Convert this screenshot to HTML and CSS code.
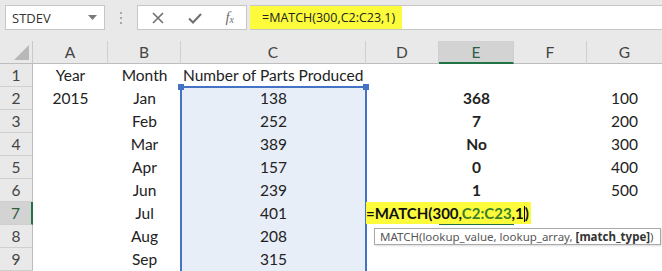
FILE: index.html
```html
<!DOCTYPE html>
<html lang="en">
<head>
  <meta charset="UTF-8" />
  <title>MATCH - Sheet</title>
  <link rel="stylesheet" href="styles.css">
</head>
<body>
  <!-- Formula bar -->
  <div class="toolbar">
    <div class="name-box">
      <span>STDEV</span>
      <svg class="drop" width="9" height="5" viewBox="0 0 9 5"><path d="M0 0h9L4.5 5z" fill="#7a7a7a"/></svg>
    </div>
    <div class="grip"><i></i><i></i><i></i></div>
    <div class="fx-buttons">
      <svg width="14" height="14" viewBox="0 0 14 14"><path d="M2 2l10 10M12 2L2 12" stroke="#6f6f6f" stroke-width="1.6" fill="none"/></svg>
      <svg width="16" height="14" viewBox="0 0 16 14"><path d="M2 7.5l4 4L14 3" stroke="#6f6f6f" stroke-width="2" fill="none"/></svg>
      <span class="fx">f<sub>x</sub></span>
    </div>
    <div class="formula-input">
      <span class="formula-text">=MATCH(300,C2:C23,1)</span>
    </div>
  </div>

  <!-- Sheet grid -->
  <div class="sheet">
    <div class="corner"></div>
    <div class="col-head">A</div>
    <div class="col-head">B</div>
    <div class="col-head">C</div>
    <div class="col-head">D</div>
    <div class="col-head active">E</div>
    <div class="col-head">F</div>
    <div class="col-head last">G</div>

    <div class="row-head">1</div>
    <div class="cell">Year</div>
    <div class="cell">Month</div>
    <div class="cell left">Number of Parts Produced</div>
    <div class="cell"></div><div class="cell"></div><div class="cell"></div><div class="cell"></div>

    <div class="row-head">2</div>
    <div class="cell">2015</div>
    <div class="cell">Jan</div>
    <div class="cell range">138</div>
    <div class="cell"></div><div class="cell bold">368</div><div class="cell"></div><div class="cell">100</div>

    <div class="row-head">3</div>
    <div class="cell"></div>
    <div class="cell">Feb</div>
    <div class="cell range">252</div>
    <div class="cell"></div><div class="cell bold">7</div><div class="cell"></div><div class="cell">200</div>

    <div class="row-head">4</div>
    <div class="cell"></div>
    <div class="cell">Mar</div>
    <div class="cell range">389</div>
    <div class="cell"></div><div class="cell bold">No</div><div class="cell"></div><div class="cell">300</div>

    <div class="row-head">5</div>
    <div class="cell"></div>
    <div class="cell">Apr</div>
    <div class="cell range">157</div>
    <div class="cell"></div><div class="cell bold">0</div><div class="cell"></div><div class="cell">400</div>

    <div class="row-head">6</div>
    <div class="cell"></div>
    <div class="cell">Jun</div>
    <div class="cell range">239</div>
    <div class="cell"></div><div class="cell bold">1</div><div class="cell"></div><div class="cell">500</div>

    <div class="row-head active">7</div>
    <div class="cell"></div>
    <div class="cell">Jul</div>
    <div class="cell range">401</div>
    <div class="cell"></div><div class="cell selected"></div><div class="cell"></div><div class="cell"></div>

    <div class="row-head">8</div>
    <div class="cell"></div>
    <div class="cell">Aug</div>
    <div class="cell range">208</div>
    <div class="cell"></div><div class="cell"></div><div class="cell"></div><div class="cell"></div>

    <div class="row-head">9</div>
    <div class="cell"></div>
    <div class="cell">Sep</div>
    <div class="cell range">315</div>
    <div class="cell"></div><div class="cell"></div><div class="cell"></div><div class="cell"></div>

    <!-- Overlays: referenced range, in-cell editor, tooltip -->
    <div class="range-box"><i class="handle l"></i><i class="handle r"></i></div>
    <div class="cell-editor">=MATCH(300,<span class="ref">C2:C23</span>,1<span class="caret"></span>)</div>
    <div class="tip">MATCH(lookup_value, lookup_array, <b>[match_type]</b>)</div>
  </div>
</body>
</html>
```

FILE: styles.css
```css
* {
  margin: 0;
  padding: 0;
  box-sizing: border-box;
}
body {
  width: 662px;
  height: 271px;
  overflow: hidden;
  background: #fff;
  font-family: Lato, 'Open Sans', sans-serif;
  color: #222;
}
/* Formula bar */
.toolbar {
  height: 41px;
  background: #e9e9e9;
  display: flex;
  align-items: flex-start;
  padding-top: 5px;
  padding-left: 5px;
}
.name-box {
  width: 100px;
  height: 25px;
  background: #fff;
  border: 1px solid #c6c6c6;
  display: flex;
  align-items: center;
  justify-content: space-between;
  padding: 0 7px 0 6px;
  font-family: 'Open Sans', sans-serif;
  font-size: 13px;
  color: #333;
}
.grip {
  width: 32px;
  height: 25px;
  display: flex;
  flex-direction: column;
  align-items: center;
  justify-content: center;
  gap: 3px;
}
.grip i {
  width: 2px;
  height: 2px;
  background: #a8a8a8;
}
.fx-buttons {
  width: 110px;
  height: 25px;
  background: #fff;
  border: 1px solid #c6c6c6;
  display: flex;
  align-items: center;
  justify-content: space-between;
  padding: 0 12px 0 13px;
}
.fx {
  font-family: 'Liberation Serif', serif;
  font-style: italic;
  font-size: 15px;
  color: #6f6f6f;
}
.fx sub {
  font-size: 10px;
  vertical-align: -1px;
}
.formula-input {
  flex: 1;
  height: 25px;
  margin-left: 3px;
  background: #fff;
  border-top: 1px solid #c6c6c6;
  border-bottom: 1px solid #c6c6c6;
  display: flex;
}
.formula-text {
  background: #fcfc3c;
  padding: 0 7px 0 12px;
  line-height: 23px;
  font-family: 'Open Sans', sans-serif;
  font-size: 12.5px;
  color: #222;
}
/* Sheet */
.sheet {
  position: relative;
  height: 230px;
  overflow: hidden;
  display: grid;
  grid-template-columns: 33px 75px 73px 185px 73px 75px 73px 75px;
  grid-auto-rows: 23px;
  font-size: 15.5px;
}
.corner,
.col-head,
.row-head {
  background: #e9e9e9;
  color: #444;
  text-align: center;
  line-height: 23px;
}
.corner {
  position: relative;
  border-right: 1px solid #c9c9c9;
  border-bottom: 1px solid #bdbdbd;
}
.corner::after {
  content: "";
  position: absolute;
  right: 3px;
  bottom: 3px;
  border-left: 15px solid transparent;
  border-bottom: 15px solid #b8b8b8;
}
.col-head {
  border-right: 1px solid #cfcfcf;
  border-bottom: 1px solid #bdbdbd;
}
.col-head.last {
  border-right: none;
}
.col-head.active {
  background: #d3d3d3;
  border-bottom: 2px solid #217346;
  color: #2e5e3e;
}
.row-head {
  border-right: 1px solid #bdbdbd;
  border-bottom: 1px solid #cfcfcf;
}
.row-head.active {
  background: #d3d3d3;
  border-right: 2px solid #217346;
  color: #2e5e3e;
}
.cell {
  line-height: 23px;
  text-align: center;
  white-space: nowrap;
}
.cell.left {
  text-align: left;
  padding-left: 2px;
}
.cell.bold {
  font-weight: bold;
}
.cell.range {
  background: #e8eef8;
}
.cell.selected {
  border: 2px solid #217346;
}
.range-box {
  position: absolute;
  left: 180px;
  top: 45px;
  width: 187px;
  height: 200px;
  border: 2px solid #4472c4;
}
.handle {
  position: absolute;
  top: -4px;
  width: 6px;
  height: 6px;
  background: #4472c4;
}
.handle.l { left: -4px; }
.handle.r { right: -4px; }
.cell-editor {
  position: absolute;
  left: 366px;
  top: 161px;
  height: 22px;
  padding-right: 2px;
  background: #fcfc3c;
  font-weight: bold;
  font-size: 15px;
  line-height: 22px;
  color: #111;
}
.cell-editor .ref {
  color: #3d7f2a;
}
.caret {
  display: inline-block;
  width: 1px;
  height: 16px;
  background: #000;
  vertical-align: -3px;
}
.tip {
  position: absolute;
  left: 374px;
  top: 187px;
  width: 287px;
  height: 17px;
  background: #fff;
  border: 1px solid #a9a9a9;
  box-shadow: 1px 1px 2px rgba(0,0,0,0.15);
  padding-left: 5px;
  font-family: 'Noto Sans', sans-serif;
  font-size: 11.5px;
  line-height: 15px;
  color: #575757;
}
.tip b {
  color: #333;
}
```
